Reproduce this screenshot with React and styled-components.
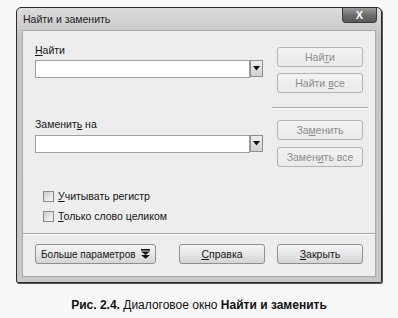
import React from 'react'
import styled, { createGlobalStyle } from 'styled-components'

const Global = createGlobalStyle`
  html, body {
    margin: 0;
    padding: 0;
    background: #f8f8f8;
  }
  body {
    font-family: "Liberation Sans", Arial, sans-serif;
    color: #1a1a1a;
  }
`

const Page = styled.div`
  width: 398px;
  height: 318px;
  display: flex;
  flex-direction: column;
  overflow: hidden;
`

const Window = styled.div`
  width: 366px;
  height: 276px;
  margin: 7px 0 0 16px;
  box-sizing: border-box;
  border: 1px solid #2c2c2c;
  border-radius: 5px 5px 2px 2px;
  background: linear-gradient(#dcdcdc, #c4c4c4 30px, #c8c8c8);
  box-shadow: 1px 1px 0 #555;
  padding: 0 5px 5px 5px;
  display: flex;
  flex-direction: column;
`

const TitleBar = styled.div`
  height: 22px;
  display: flex;
  justify-content: space-between;
  align-items: flex-start;
  padding-left: 1px;
`

const Title = styled.span`
  font-size: 10.5px;
  line-height: 22px;
  color: #1c1c1c;
`

const CloseButton = styled.div`
  width: 35px;
  height: 15px;
  margin-right: -1px;
  box-sizing: border-box;
  border: 1px solid #3a3a3a;
  border-top: none;
  border-radius: 0 0 4px 4px;
  background: linear-gradient(#9a9a9a, #6a6a6a 55%, #5a5a5a);
  color: #fff;
  font-size: 11px;
  font-weight: bold;
  line-height: 14px;
  text-align: center;
`

const Panel = styled.div`
  flex: 1;
  box-sizing: border-box;
  border: 1px solid #a9a9a9;
  background: #ededed;
  display: flex;
  flex-direction: column;
`

const Top = styled.div`
  height: 202px;
  display: flex;
  gap: 14px;
  padding-left: 12px;
`

const LeftCol = styled.div`
  width: 228px;
  display: flex;
  flex-direction: column;
`

const RightCol = styled.div`
  width: 86px;
  display: flex;
  flex-direction: column;
`

const Label = styled.div`
  margin-top: ${p => p.$mt}px;
  font-size: 10.5px;
  line-height: 14px;
  color: #151515;
`

const Combo = styled.div`
  margin-top: ${p => p.$mt}px;
  height: 18px;
  display: flex;
`

const Field = styled.div`
  flex: 1;
  box-sizing: border-box;
  border: 1px solid #a0a0a0;
  background: #fff;
`

const DropButton = styled.div`
  width: 13px;
  box-sizing: border-box;
  border: 1px solid #8e8e8e;
  margin: 0 0 1px 0;
  background: linear-gradient(#eeeeee, #cfcfcf);
  display: flex;
  align-items: center;
  justify-content: center;
`

const CheckRow = styled.label`
  margin-top: ${p => p.$mt}px;
  margin-left: 8px;
  height: 16px;
  display: flex;
  align-items: center;
  gap: 4px;
  font-size: 10.5px;
  color: #151515;
`

const Box = styled.span`
  width: 11px;
  height: 11px;
  box-sizing: border-box;
  border: 1px solid #8a8a8a;
  background: linear-gradient(135deg, #c9c9c9, #e9e9e9 60%, #f4f4f4);
`

const Button = styled.div`
  width: ${p => p.$w || 86}px;
  height: 20px;
  margin-top: ${p => p.$mt || 0}px;
  margin-left: ${p => p.$ml || 0}px;
  box-sizing: border-box;
  border: 1px solid ${p => (p.$disabled ? '#b3b3b3' : '#8f8f8f')};
  border-radius: 3px;
  background: ${p =>
    p.$disabled
      ? 'linear-gradient(#f3f3f3, #eaeaea)'
      : 'linear-gradient(#f6f6f6, #e6e6e6 50%, #d5d5d5)'};
  color: ${p => (p.$disabled ? '#8c8c8c' : '#151515')};
  font-size: ${p => (p.$left ? 10 : 10.5)}px;
  white-space: nowrap;
  display: flex;
  align-items: center;
  justify-content: ${p => (p.$left ? 'space-between' : 'center')};
  padding: 0 ${p => (p.$left ? 5 : 0)}px;
`

const SideRule = styled.div`
  width: 96px;
  height: 1px;
  margin: 14px 0 0 -5px;
  background: #a9a9a9;
  box-shadow: 0 1px 0 #fafafa;
`

const Bottom = styled.div`
  flex: 1;
  border-top: 1px solid #a9a9a9;
  box-shadow: inset 0 1px 0 #fafafa;
  display: flex;
  align-items: flex-start;
  padding: 10px 0 0 12px;
`

const Caption = styled.div`
  margin-top: 14px;
  text-align: center;
  font-size: 12px;
  line-height: 16px;
  color: #111;
`

function DownArrow() {
  return (
    <svg width="7" height="5" viewBox="0 0 7 5">
      <path d="M0 0 H7 L3.5 4.5 Z" fill="#111" />
    </svg>
  )
}

function DoubleDown() {
  return (
    <svg width="9" height="10" viewBox="0 0 9 10">
      <path d="M0 0 H9 V1.6 H0 Z" fill="#111" />
      <path d="M0 2.5 H9 L4.5 6 Z" fill="#111" />
      <path d="M0 6 H9 L4.5 9.8 Z" fill="#111" />
    </svg>
  )
}

export default function App() {
  return (
    <Page>
      <Global />
      <Window>
        <TitleBar>
          <Title>Найти и заменить</Title>
          <CloseButton>X</CloseButton>
        </TitleBar>
        <Panel>
          <Top>
            <LeftCol>
              <Label $mt={12}><u>Н</u>айти</Label>
              <Combo $mt={3}>
                <Field />
                <DropButton><DownArrow /></DropButton>
              </Combo>
              <Label $mt={39}>Заменит<u>ь</u> на</Label>
              <Combo $mt={4}>
                <Field />
                <DropButton><DownArrow /></DropButton>
              </Combo>
              <CheckRow $mt={35}><Box /><span><u>У</u>читывать регистр</span></CheckRow>
              <CheckRow $mt={4}><Box /><span><u>Т</u>олько слово целиком</span></CheckRow>
            </LeftCol>
            <RightCol>
              <Button $disabled $mt={16}><span>Най<u>т</u>и</span></Button>
              <Button $disabled $mt={6}><span>Найти <u>в</u>се</span></Button>
              <SideRule />
              <Button $disabled $mt={12}><span>За<u>м</u>енить</span></Button>
              <Button $disabled $mt={7}><span>Замен<u>и</u>ть все</span></Button>
            </RightCol>
          </Top>
          <Bottom>
            <Button $w={121} $left><span>Больше параметров</span><DoubleDown /></Button>
            <Button $ml={23}><span><u>С</u>правка</span></Button>
            <Button $ml={12}><span><u>З</u>акрыть</span></Button>
          </Bottom>
        </Panel>
      </Window>
      <Caption>
        <b>Рис. 2.4.</b> Диалоговое окно <b>Найти и заменить</b>
      </Caption>
    </Page>
  )
}
